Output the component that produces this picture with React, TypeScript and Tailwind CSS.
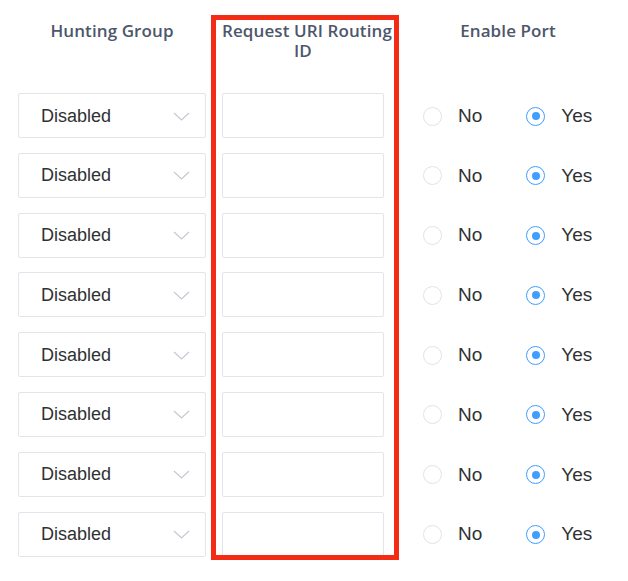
import React from "react";

const rows = Array.from({ length: 8 });

function Chevron() {
  return (
    <svg width="17" height="9" viewBox="0 0 17 9" fill="none" className="shrink-0">
      <polyline points="1,1 8.5,8 16,1" stroke="#c4c8d0" strokeWidth="1.2" />
    </svg>
  );
}

function Radio({ checked }: { checked?: boolean }) {
  return (
    <span
      className={
        "flex h-[19px] w-[19px] shrink-0 items-center justify-center rounded-full border bg-white " +
        (checked ? "border-[#409eff]" : "border-[#dfe3ea]")
      }
    >
      {checked && <span className="h-[8px] w-[8px] rounded-full bg-[#409eff]" />}
    </span>
  );
}

export default function App() {
  return (
    <div
      className="relative h-[581px] w-[628px] bg-white pl-[18px] pt-[21px]"
      style={{ fontFamily: "'Liberation Sans', Arial, sans-serif" }}
    >
      {/* header */}
      <div
        className="flex h-[72px] items-start text-[17px] font-semibold leading-[20px] tracking-[0.1px] text-[#4d576b]"
        style={{ fontFamily: "'Open Sans', sans-serif" }}
      >
        <div className="w-[188px] text-center">Hunting Group</div>
        <div className="ml-[16px] w-[162px] text-center whitespace-nowrap">
          <div>Request URI Routing</div>
          <div>ID</div>
        </div>
        <div className="ml-[16px] w-[216px] text-center">Enable Port</div>
      </div>

      {/* rows */}
      <div className="flex flex-col gap-[14.8px]">
        {rows.map((_, i) => (
          <div key={i} className="flex h-[45px] items-stretch">
            <div className="flex w-[188px] items-center justify-between rounded-[2px] border border-[#e2e5ea] bg-white pl-[22px] pr-[15px] pt-[1px] text-[18px] text-[#303133]">
              <span>Disabled</span>
              <Chevron />
            </div>
            <div className="ml-[16px] w-[162px] rounded-[2px] border border-[#e2e5ea] bg-white" />
            <div className="ml-[16px] flex w-[216px] items-center pl-[23px] pt-[1px] text-[19px] text-[#303133]">
              <Radio />
              <span className="ml-[16px]">No</span>
              <span className="ml-[44px] flex items-center">
                <Radio checked />
                <span className="ml-[16px]">Yes</span>
              </span>
            </div>
          </div>
        ))}
      </div>

      {/* highlight annotation */}
      <div className="pointer-events-none absolute left-[211px] top-[15px] h-[545px] w-[188px] border-[5px] border-[#f42c16]" />
    </div>
  );
}
